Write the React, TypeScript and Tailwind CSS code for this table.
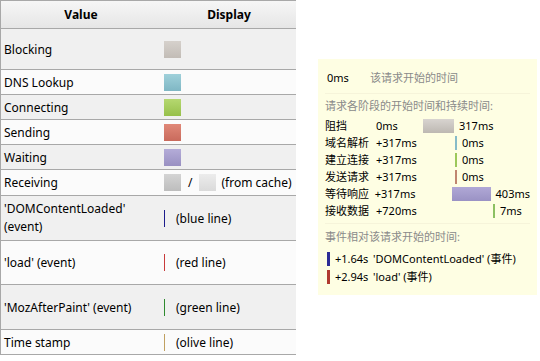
import React from 'react';

const swatch = (cls: string) => <span className={`inline-block w-[17px] h-[17px] ${cls}`} />;
const line = (cls: string) => <span className={`inline-block w-px h-[17px] ${cls}`} />;

type Row = { label: React.ReactNode; display: React.ReactNode; h: string; odd: boolean };

const rows: Row[] = [
  { label: 'Blocking', display: swatch('bg-gradient-to-b from-[#d6d1cc] to-[#c2bcb6]'), h: 'h-[41px]', odd: true },
  { label: 'DNS Lookup', display: swatch('bg-gradient-to-b from-[#9fd0da] to-[#7fb7c4]'), h: 'h-[25px]', odd: false },
  { label: 'Connecting', display: swatch('bg-gradient-to-b from-[#b5d870] to-[#97c04a]'), h: 'h-[25px]', odd: true },
  { label: 'Sending', display: swatch('bg-gradient-to-b from-[#e08878] to-[#c96a5c]'), h: 'h-[25px]', odd: false },
  { label: 'Waiting', display: swatch('bg-gradient-to-b from-[#b4acd8] to-[#9990c2]'), h: 'h-[25px]', odd: true },
  {
    label: 'Receiving',
    display: (
      <span className="flex items-center">
        {swatch('bg-gradient-to-b from-[#d4d4d4] to-[#bdbdbd]')}
        <span className="mx-[7px]">/</span>
        {swatch('bg-gradient-to-b from-[#ececec] to-[#dadada]')}
        <span className="ml-[5px]">(from cache)</span>
      </span>
    ),
    h: 'h-[26px]',
    odd: false,
  },
  {
    label: (
      <span className="block leading-[18px]">
        'DOMContentLoaded'
        <br />
        (event)
      </span>
    ),
    display: (
      <span className="flex items-center gap-[11px]">
        {line('bg-[#1c1c8c]')}
        (blue line)
      </span>
    ),
    h: 'h-[45px]',
    odd: true,
  },
  {
    label: "'load' (event)",
    display: (
      <span className="flex items-center gap-[11px]">
        {line('bg-[#c83a3a]')}
        (red line)
      </span>
    ),
    h: 'h-[44px]',
    odd: false,
  },
  {
    label: "'MozAfterPaint' (event)",
    display: (
      <span className="flex items-center gap-[11px]">
        {line('bg-[#2f8a2f]')}
        (green line)
      </span>
    ),
    h: 'h-[45px]',
    odd: true,
  },
  {
    label: 'Time stamp',
    display: (
      <span className="flex items-center gap-[11px]">
        {line('bg-[#c0a060]')}
        (olive line)
      </span>
    ),
    h: 'h-[25px]',
    odd: false,
  },
];

const SCALE = 0.0975;

const phases = [
  { name: '阻挡', start: '0ms', startMs: 0, dur: 317, cls: 'bg-gradient-to-b from-[#d8d4d0] to-[#bdb8b2]' },
  { name: '域名解析', start: '+317ms', startMs: 317, dur: 0, cls: 'bg-[#86bcc8]' },
  { name: '建立连接', start: '+317ms', startMs: 317, dur: 0, cls: 'bg-[#9cc85a]' },
  { name: '发送请求', start: '+317ms', startMs: 317, dur: 0, cls: 'bg-[#c08670]' },
  { name: '等待响应', start: '+317ms', startMs: 317, dur: 403, cls: 'bg-gradient-to-b from-[#b0a8d6] to-[#9a92c4]' },
  { name: '接收数据', start: '+720ms', startMs: 720, dur: 7, cls: 'bg-[#8cc062]' },
];

export default function App() {
  return (
    <div className="w-[540px] h-[361px] bg-white flex items-start overflow-hidden text-black">
      {/* Legend table */}
      <div
        className="w-[296px] border-l border-t border-[#a8a8a8] text-[12px] leading-[15px]"
        style={{ fontFamily: '"Noto Sans", "DejaVu Sans", sans-serif' }}
      >
        <div className="grid grid-cols-[160px_136px] h-[28px] items-center font-bold bg-gradient-to-b from-[#f6f6f6] to-[#e6e6e6] border-b border-[#a8a8a8]">
          <div className="text-center">Value</div>
          <div className="text-center">Display</div>
        </div>
        {rows.map((r, i) => (
          <div
            key={i}
            className={`grid grid-cols-[160px_136px] items-center border-b border-[#a8a8a8] ${r.h} ${
              r.odd ? 'bg-[#f0f0f0]' : 'bg-[#fbfbfb]'
            }`}
          >
            <div className="pl-[3px]">{r.label}</div>
            <div className="pl-[3px] flex items-center">{r.display}</div>
          </div>
        ))}
      </div>

      {/* Tooltip panel */}
      <div
        className="ml-[22px] mt-[59px] w-[219px] h-[236px] bg-[#fefee3] text-[11px] leading-[14px] px-[7px]"
        style={{ fontFamily: '"Noto Sans", "Noto Sans CJK SC", sans-serif' }}
      >
        <div className="flex items-center h-[35px] pt-[4px] border-b border-[#f6f4da]">
          <span className="ml-[2px] w-[43px]">0ms</span>
          <span className="text-[#8a8a8a]">该请求开始的时间</span>
        </div>

        <div className="border-b border-[#f6f4da] pb-[4px]">
          <div className="text-[#8a8a8a] h-[22px] flex items-center mt-[1px]">请求各阶段的开始时间和持续时间:</div>
          <div className="flex flex-col">
            {phases.map((p) => {
              const w = Math.max(Math.round(p.dur * SCALE), 2);
              const off = Math.round(p.startMs * SCALE) + (p.dur === 0 ? 1 : 0);
              return (
                <div key={p.name} className="flex items-center h-[17px]">
                  <span className="w-[51px]">{p.name}</span>
                  <span className="w-[47px]">{p.start}</span>
                  <span className="flex items-center">
                    <span style={{ width: off }} />
                    <span className={`inline-block h-[14px] ${p.cls}`} style={{ width: w }} />
                    <span className="ml-[5px]">{p.dur}ms</span>
                  </span>
                </div>
              );
            })}
          </div>
        </div>

        <div>
          <div className="text-[#8a8a8a] h-[26px] flex items-center">事件相对该请求开始的时间:</div>
          <div className="flex items-center h-[18px]">
            <span className="ml-[2px] inline-block w-[3px] h-[14px] bg-[#2c2c96]" />
            <span className="ml-[5px] w-[38px]">+1.64s</span>
            <span>'DOMContentLoaded' (事件)</span>
          </div>
          <div className="flex items-center h-[18px]">
            <span className="ml-[2px] inline-block w-[3px] h-[14px] bg-[#b03a30]" />
            <span className="ml-[5px] w-[38px]">+2.94s</span>
            <span>'load' (事件)</span>
          </div>
        </div>
      </div>
    </div>
  );
}
